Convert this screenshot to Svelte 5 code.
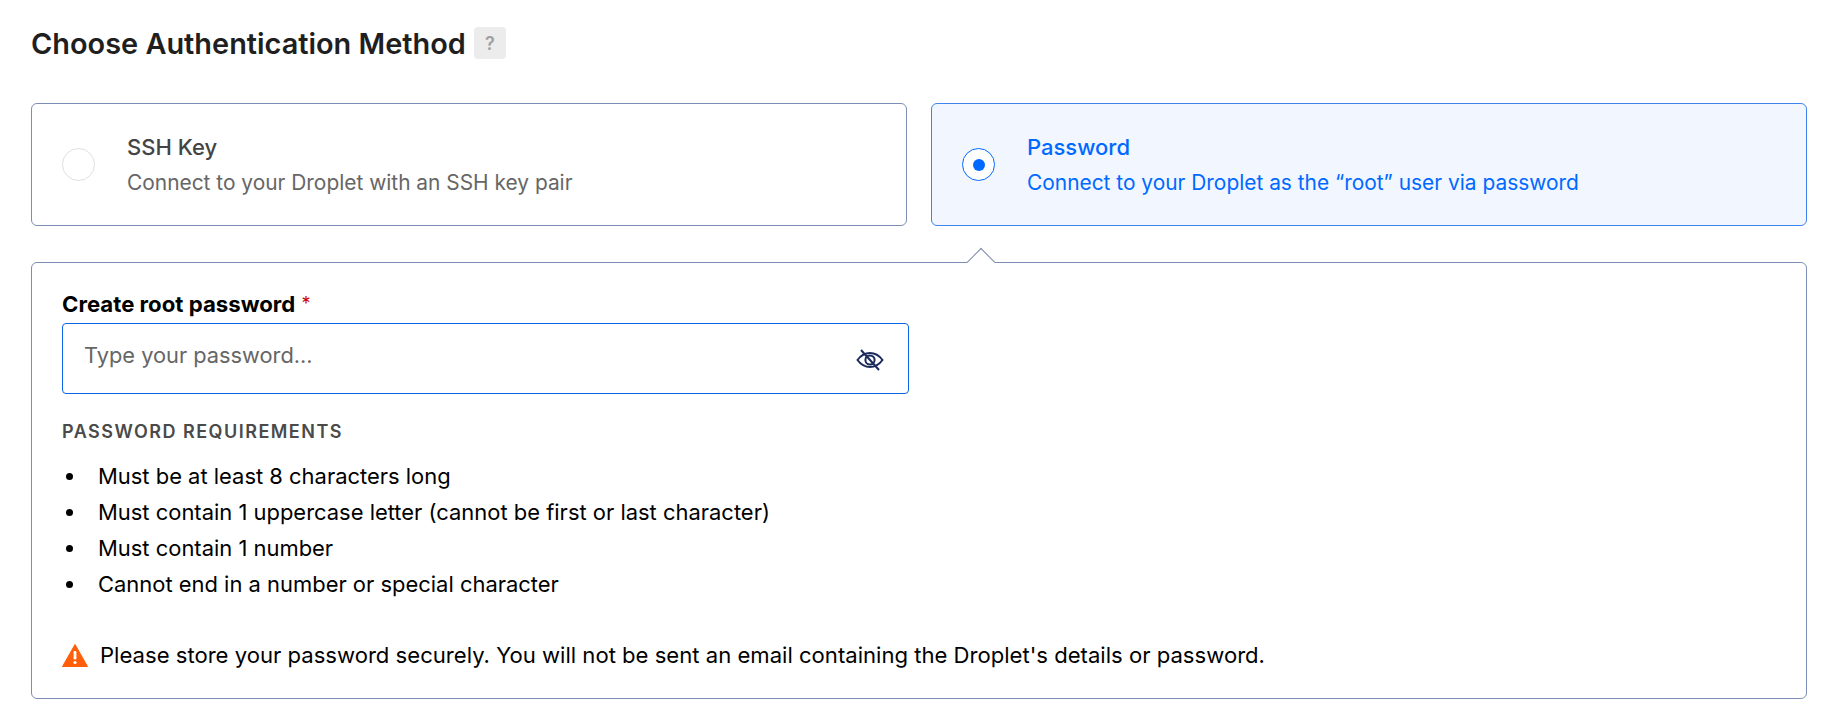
<script>
  const rules = [
    'Must be at least 8 characters long',
    'Must contain 1 uppercase letter (cannot be first or last character)',
    'Must contain 1 number',
    'Cannot end in a number or special character'
  ];
</script>

<div class="page">
  <div class="head">
    <h2>Choose Authentication Method</h2>
    <span class="help">?</span>
  </div>

  <div class="cards">
    <div class="card">
      <span class="radio"></span>
      <div class="copy">
        <div class="title">SSH Key</div>
        <div class="desc">Connect to your Droplet with an SSH key pair</div>
      </div>
    </div>
    <div class="card active">
      <span class="radio on"><span class="dot"></span></span>
      <div class="copy">
        <div class="title">Password</div>
        <div class="desc">Connect to your Droplet as the “root” user via password</div>
      </div>
    </div>
  </div>

  <div class="panel">
    <span class="caret"></span>
    <div class="label">Create root password <span class="req">*</span></div>
    <div class="input">
      <span class="ph">Type your password...</span>
      <svg class="eye" viewBox="0 0 28 24" width="28" height="24" fill="none" stroke="#1b2b5c" stroke-width="2">
        <path d="M1.5 12C5 7.2 9.2 5 14 5s9 2.2 12.5 7C23 16.800 18.800 19 14 19S5 16.800 1.500 12Z" />
        <circle cx="14" cy="12" r="4.600" />
        <path d="M5 2l18 20" />
      </svg>
    </div>
    <div class="req-title">PASSWORD REQUIREMENTS</div>
    <ul>
      {#each rules as r}
        <li>{r}</li>
      {/each}
    </ul>
    <div class="warn">
      <svg viewBox="0 0 26 24" width="26" height="24">
        <path d="M13 1.500 25.500 23.500H.5Z" fill="#ff5f0a" stroke="#ff5f0a" stroke-width="1" stroke-linejoin="round" />
        <rect x="11.600" y="8" width="2.800" height="8.500" rx="1.200" fill="#fff" />
        <circle cx="13" cy="19.500" r="1.600" fill="#fff" />
      </svg>
      <span>Please store your password securely. You will not be sent an email containing the Droplet's details or password.</span>
    </div>
  </div>
</div>

<style>
  :global(body) {
    margin: 0;
    background: #fff;
  }
  .page {
    box-sizing: border-box;
    width: 1848px;
    height: 721px;
    padding: 25px 41px 0 31px;
    font-family: Inter, "Liberation Sans", sans-serif;
    color: #000;
  }
  .head {
    display: flex;
    align-items: center;
    height: 36px;
  }
  h2 {
    margin: 0;
    padding-top: 2px;
    font-size: 28.900px;
    font-weight: 570;
    line-height: 36px;
    color: #1f1f1f;
  }
  .help {
    margin-left: 8px;
    width: 32px;
    height: 32px;
    border-radius: 4px;
    background: #ececec;
    color: #a0a0a0;
    font-size: 18px;
    font-weight: 600;
    display: flex;
    align-items: center;
    justify-content: center;
  }
  .cards {
    display: grid;
    grid-template-columns: 1fr 1fr;
    gap: 24px;
    margin-top: 42px;
  }
  .card {
    box-sizing: border-box;
    height: 123px;
    display: flex;
    align-items: center;
    padding-left: 30px;
    border: 1px solid #7e8db5;
    border-radius: 6px;
    color: #444;
  }
  .card.active {
    background: #f2f7ff;
    border-color: #3d84ee;
    color: #0069ff;
  }
  .radio {
    box-sizing: border-box;
    flex: none;
    width: 33px;
    height: 33px;
    border: 1px solid #e0e0e0;
    border-radius: 50%;
    background: #fff;
    display: flex;
    align-items: center;
    justify-content: center;
  }
  .radio.on {
    border-color: #0069ff;
  }
  .dot {
    width: 12px;
    height: 12px;
    border-radius: 50%;
    background: #0069ff;
  }
  .copy {
    margin-left: 32px;
    padding-top: 1px;
  }
  .title {
    font-size: 22px;
    font-weight: 550;
    line-height: 30px;
  }
  .desc {
    margin-top: 6px;
    font-size: 20.900px;
    line-height: 30px;
  }
  .card:not(.active) .desc {
    color: #666;
  }
  .panel {
    position: relative;
    box-sizing: border-box;
    height: 437px;
    margin-top: 36px;
    padding: 28px 30px 0;
    border: 1px solid #7e8db5;
    border-radius: 6px;
  }
  .caret {
    position: absolute;
    left: 939px;
    top: -11px;
    width: 20px;
    height: 20px;
    box-sizing: border-box;
    background: #fff;
    border-top: 1px solid #7b88a8;
    border-left: 1px solid #7b88a8;
    transform: rotate(45deg);
  }
  .label {
    position: relative;
    font-size: 22.200px;
    font-weight: 700;
    line-height: 26px;
  }
  .req {
    color: #c00;
    font-size: 18px;
    font-weight: 400;
    margin-left: 1px;
    vertical-align: 2px;
  }
  .input {
    box-sizing: border-box;
    width: 847px;
    height: 71px;
    margin-top: 6px;
    padding: 0 24px 0 21px;
    display: flex;
    align-items: center;
    justify-content: space-between;
    border: 1px solid #0a66e6;
    border-radius: 4px;
  }
  .ph {
    font-size: 21.800px;
    color: #666;
    position: relative;
    top: -4px;
  }
  .eye {
    position: relative;
    top: 1px;
  }
  .req-title {
    margin-top: 26px;
    font-size: 18px;
    font-weight: 600;
    letter-spacing: 1.480px;
    line-height: 24px;
    color: #4a4a4a;
  }
  ul {
    margin: 14px 0 0;
    padding: 0;
    list-style: none;
    font-size: 21.950px;
    line-height: 36px;
  }
  li {
    display: flex;
    align-items: center;
  }
  li::before {
    content: '';
    flex: none;
    width: 7px;
    height: 7px;
    margin: 0 25px 0 4px;
    border-radius: 50%;
    background: #000;
  }
  .warn {
    margin-top: 35px;
    display: flex;
    align-items: center;
    gap: 12px;
    font-size: 22.100px;
    line-height: 36px;
  }
</style>
